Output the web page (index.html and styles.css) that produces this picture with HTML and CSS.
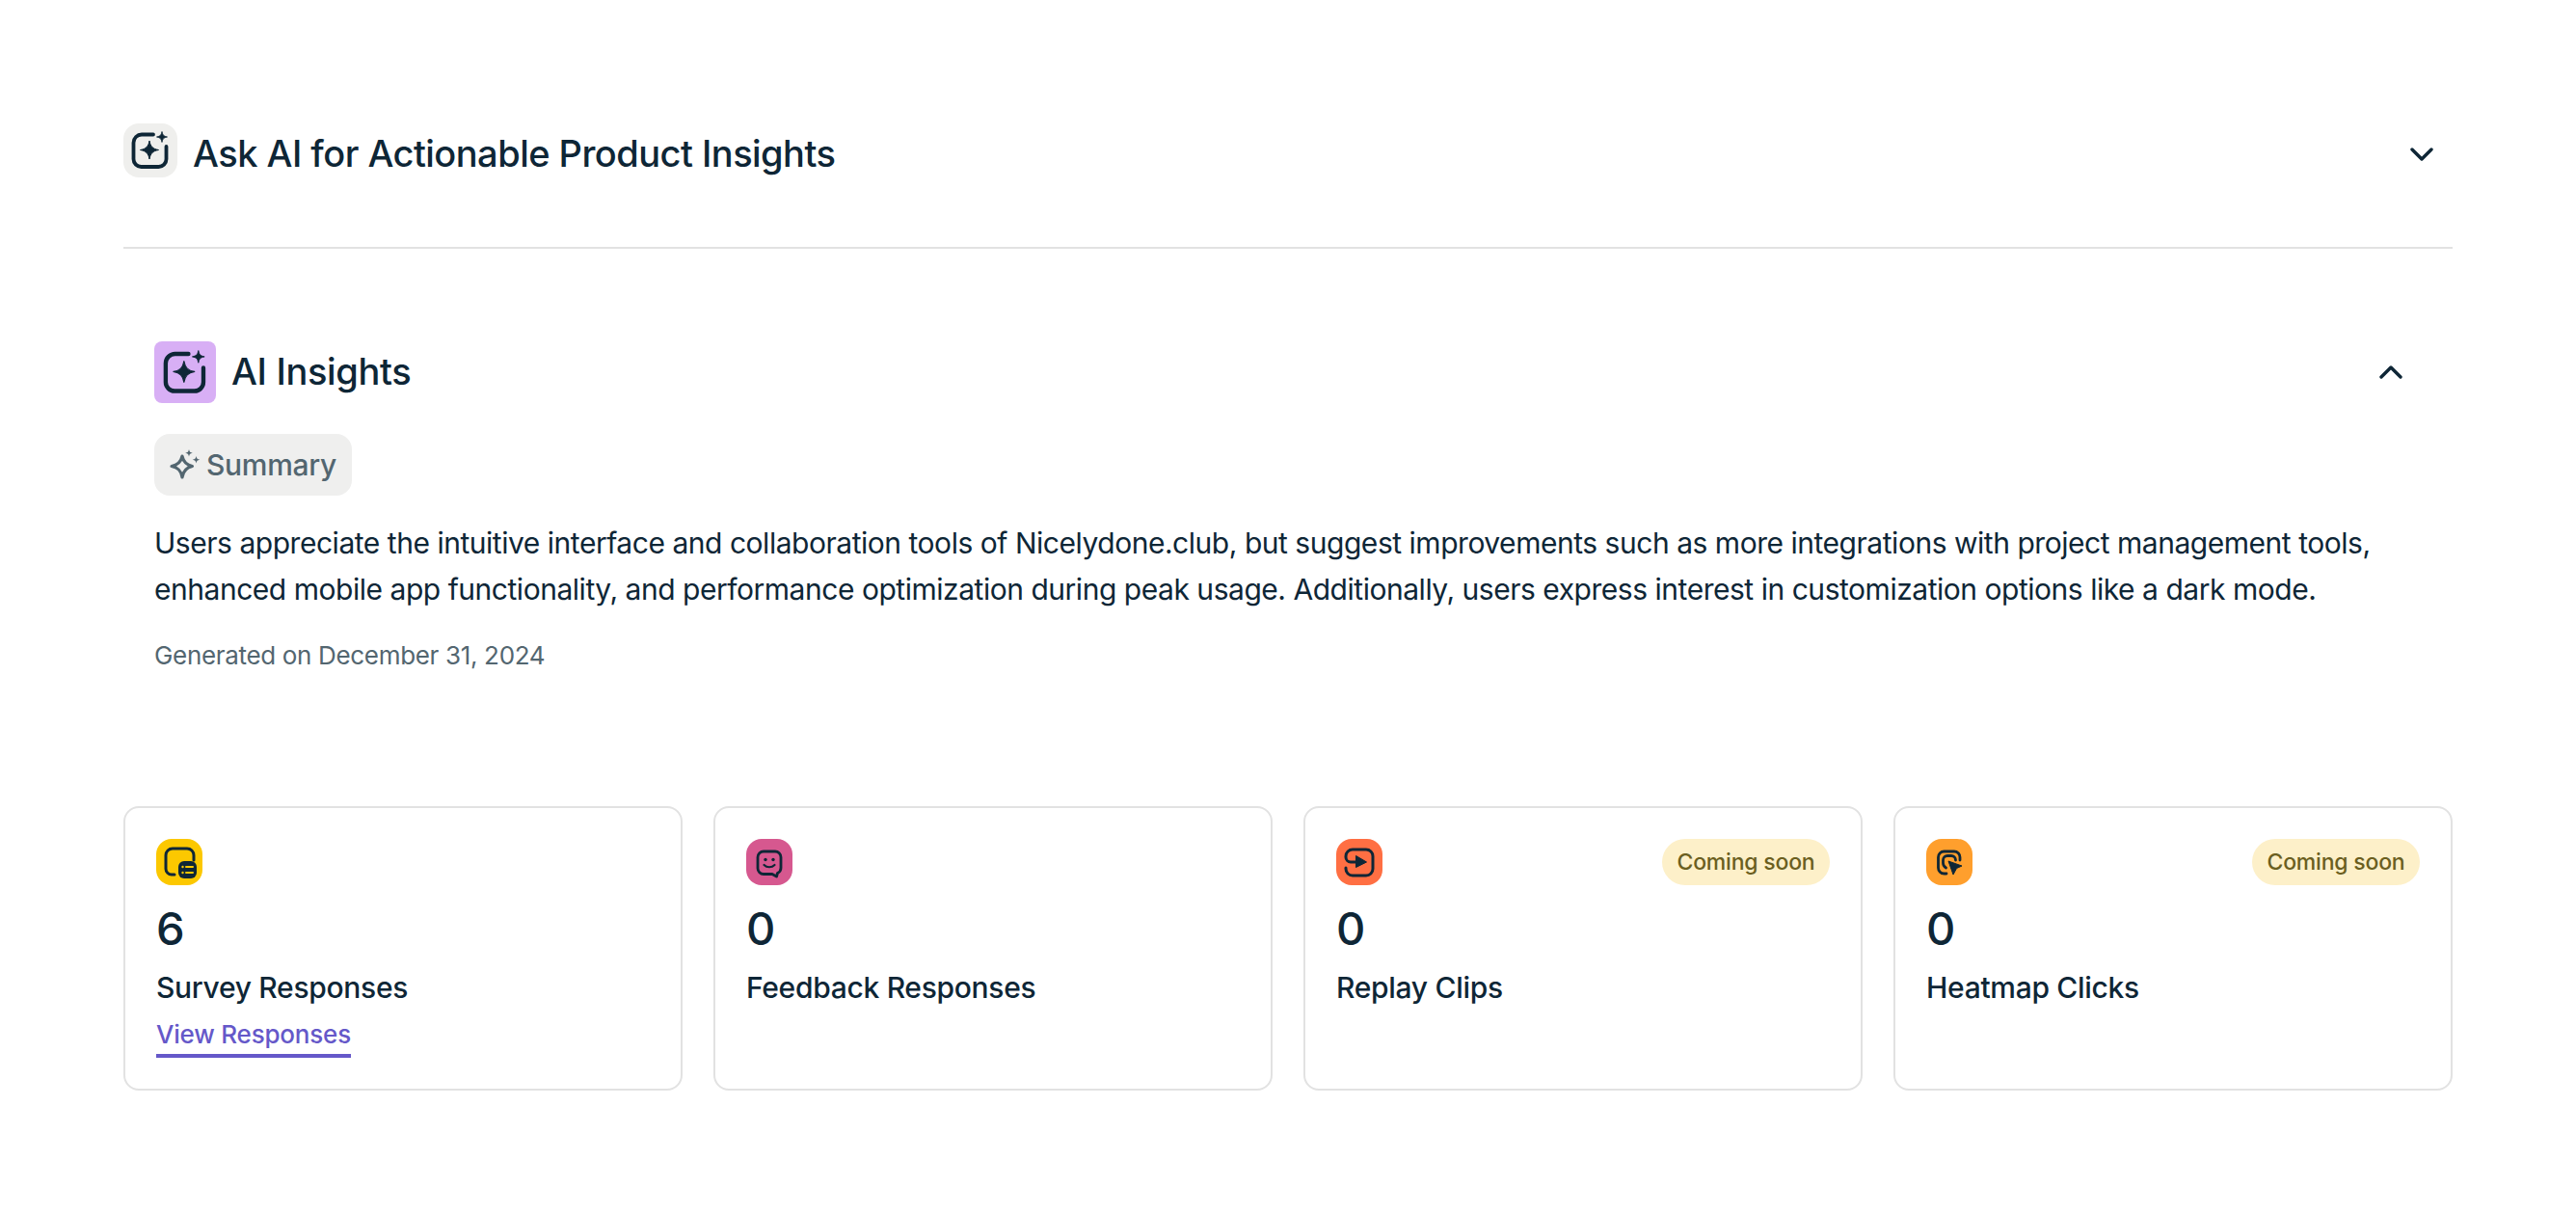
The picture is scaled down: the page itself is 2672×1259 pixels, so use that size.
FILE: index.html
```html
<!DOCTYPE html>
<html lang="en">
<head>
<meta charset="utf-8">
<title>AI Insights</title>
<link rel="stylesheet" href="styles.css">
</head>
<body>
<svg class="defs" width="0" height="0" aria-hidden="true">
  <symbol id="ai" viewBox="0 0 40 40">
    <path d="M23 3.500H11A8.500 8.500 0 0 0 2.500 12v17a8 8 0 0 0 8 8h18a8 8 0 0 0 8-8V16" fill="none" stroke="currentColor" stroke-width="3.800" stroke-linecap="round"/>
    <path d="M19 10c1 5.800 3.500 8.500 9.500 9.500-6 1-8.500 3.700-9.500 9.500-1-5.800-3.500-8.500-9.500-9.500 6-1 8.500-3.700 9.500-9.500Z" fill="currentColor" stroke="currentColor" stroke-linejoin="round"/>
    <path d="M32 .5c.8 3.800 1.700 4.700 5.500 5.500-3.800.8-4.700 1.700-5.500 5.500-.8-3.800-1.700-4.700-5.500-5.500 3.800-.8 4.700-1.700 5.500-5.500Z" fill="currentColor" stroke="currentColor" stroke-width=".8" stroke-linejoin="round"/>
  </symbol>
  <symbol id="chev" viewBox="0 0 24 14">
    <path d="M2 2l10 10L22 2" fill="none" stroke="currentColor" stroke-width="3.400" stroke-linecap="round" stroke-linejoin="round"/>
  </symbol>
</svg>
<main class="page">
  <header class="ask">
    <div class="ask-title">
      <span class="ask-icon"><svg class="i40"><use href="#ai"/></svg></span>
      <h1>Ask AI for Actionable Product Insights</h1>
    </div>
    <svg class="chev down"><use href="#chev"/></svg>
  </header>

  <section class="insights">
    <div class="ins-head">
      <div class="ins-title">
        <span class="ins-icon"><svg class="i46"><use href="#ai"/></svg></span>
        <h2>AI Insights</h2>
      </div>
      <svg class="chev up"><use href="#chev"/></svg>
    </div>
    <div class="pill-summary">
      <svg class="spark" viewBox="0 0 32 32">
        <path d="M13 7c1.200 5.800 4.700 9.300 10.500 10.500-5.800 1.200-9.300 4-10.500 11.500-1.200-7.500-4.700-10.300-11-11.500C8.300 16.300 11.800 12.800 13 7Z" fill="none" stroke="currentColor" stroke-width="3.200" stroke-linejoin="round"/>
        <path d="M20 0c.5 2.600 1.200 3.300 3.800 3.800-2.600.5-3.300 1.200-3.800 3.800-.5-2.600-1.200-3.300-3.800-3.800 2.600-.5 3.300-1.200 3.800-3.800ZM27.500 7c.5 2.600 1.200 3.300 3.800 3.800-2.600.5-3.300 1.200-3.800 3.800-.5-2.600-1.200-3.300-3.800-3.800 2.600-.5 3.300-1.200 3.800-3.800Z" fill="currentColor"/>
      </svg>
      <span>Summary</span>
    </div>
    <p class="body-text">Users appreciate the intuitive interface and collaboration tools of Nicelydone.club, but suggest improvements such as more integrations with project management tools, enhanced mobile app functionality, and performance optimization during peak usage. Additionally, users express interest in customization options like a dark mode.</p>
    <p class="generated">Generated on December 31, 2024</p>
  </section>

  <section class="cards">
    <article class="card">
      <div class="card-top">
        <span class="c-icon yellow">
          <svg viewBox="0 0 48 48">
            <path d="M19 37h-3a6 6 0 0 1-6-6V17a7 7 0 0 1 7-7h15a7 7 0 0 1 7 7v5" fill="none" stroke="currentColor" stroke-width="3" stroke-linecap="round"/>
            <rect x="23" y="23" width="19" height="18" rx="6" fill="currentColor"/>
            <path d="M31 29h7M31 35h7" stroke="#fcc800" stroke-width="2" stroke-linecap="round"/>
            <circle cx="27.500" cy="29" r="1.200" fill="#fcc800"/><circle cx="27.500" cy="35" r="1.200" fill="#fcc800"/>
          </svg>
        </span>
      </div>
      <div class="num">6</div>
      <div class="label">Survey Responses</div>
      <a class="link" href="#">View Responses</a>
    </article>
    <article class="card">
      <div class="card-top">
        <span class="c-icon pink">
          <svg viewBox="0 0 48 48">
            <path d="M18 13h12a6 6 0 0 1 6 6v11a6 6 0 0 1-3.500 5.500L31.500 39 27 36.500h-9a6 6 0 0 1-6-6V19a6 6 0 0 1 6-6Z" fill="none" stroke="currentColor" stroke-width="2.800" stroke-linejoin="round"/>
            <circle cx="20" cy="21.500" r="1.700" fill="currentColor"/><circle cx="28" cy="21.500" r="1.700" fill="currentColor"/>
            <path d="M18.500 27c3 3 8 3 11 0" fill="none" stroke="currentColor" stroke-width="2.200" stroke-linecap="round"/>
          </svg>
        </span>
      </div>
      <div class="num">0</div>
      <div class="label">Feedback Responses</div>
    </article>
    <article class="card">
      <div class="card-top">
        <span class="c-icon orange">
          <svg viewBox="0 0 48 48">
            <path d="M22 24h-7a5 5 0 0 1-5-5v-1a7 7 0 0 1 7-7h14a7 7 0 0 1 7 7v13a7 7 0 0 1-7 7H17a7 7 0 0 1-7-7v-1" fill="none" stroke="currentColor" stroke-width="3" stroke-linecap="round" stroke-linejoin="round"/>
            <path d="M20.500 17.500l11 6.500-11 5.500Z" fill="currentColor" stroke="currentColor" stroke-linejoin="round"/>
          </svg>
        </span>
      </div>
      <div class="num">0</div>
      <div class="label">Replay Clips</div>
      <span class="soon">Coming soon</span>
    </article>
    <article class="card">
      <div class="card-top">
        <span class="c-icon amber">
          <svg viewBox="0 0 48 48">
            <path d="M21 36h-2.500a6 6 0 0 1-6-6V19a6 6 0 0 1 6-6H29a6 6 0 0 1 6 6v3" fill="none" stroke="currentColor" stroke-width="2.800" stroke-linecap="round"/>
            <path d="M20.500 30a6 6 0 0 1-3-5v-3a4.500 4.500 0 0 1 4.500-4.500h4a4.500 4.500 0 0 1 4.500 4.500" fill="none" stroke="currentColor" stroke-width="2.800" stroke-linecap="round"/>
            <path d="M23 23l14 5-5.500 2.500L28 37Z" fill="currentColor" stroke="currentColor" stroke-linejoin="round"/>
          </svg>
        </span>
      </div>
      <div class="num">0</div>
      <div class="label">Heatmap Clicks</div>
      <span class="soon">Coming soon</span>
    </article>
  </section>
</main>
</body>
</html>
```

FILE: styles.css
```css
* { box-sizing: border-box; }
html, body { margin: 0; background: #fff; }
body {
  font-family: Inter, "Liberation Sans", sans-serif;
  color: #0e2636;
}
.defs { position: absolute; }
.page { padding: 128px 128px 0; }

.ask {
  display: flex;
  align-items: flex-start;
  justify-content: space-between;
  padding: 0 20px 0 0;
  border-bottom: 2px solid #e2e2e2;
  height: 130px;
}
.ask-title { display: flex; align-items: flex-start; gap: 16px; }
.ask-icon {
  width: 56px; height: 56px;
  border-radius: 16px;
  background: #efefed;
  display: flex; align-items: center; justify-content: center;
}
.i40 { width: 40px; height: 40px; }
.ask h1 { margin: 3px 0 0; font-size: 38px; font-weight: 500; letter-spacing: -0.53px; line-height: 56px; }
.chev { width: 24px; height: 14px; color: #0e2636; }
.chev.down { margin-top: 25px; }
.chev.up { transform: rotate(180deg); }

.insights { padding: 96px 52px 0 32px; }
.ins-head { display: flex; align-items: center; justify-content: space-between; height: 64px; }
.ins-title { display: flex; align-items: center; gap: 16px; }
.ins-icon {
  width: 64px; height: 64px;
  border-radius: 8px;
  background: #d8aff5;
  display: flex; align-items: center; justify-content: center;
}
.i46 { width: 46px; height: 46px; }
.ins-head h2 { margin: -2px 0 0; font-size: 38px; font-weight: 500; letter-spacing: -0.35px; line-height: 56px; }

.pill-summary {
  display: inline-flex;
  align-items: center;
  gap: 6px;
  margin-top: 32px;
  height: 64px;
  padding: 0 16px;
  border-radius: 16px;
  background: #efefee;
  color: #536670;
  font-size: 30px;
  font-weight: 500;
  letter-spacing: -0.3px;
}
.spark { width: 32px; height: 32px; }
.body-text {
  margin: 25px -30px 0 0;
  font-size: 30px;
  line-height: 48px;
  letter-spacing: -0.47px;
}
.generated { margin: 25px 0 0; font-size: 26px; line-height: 40px; color: #536670; letter-spacing: -0.33px; }

.cards {
  display: grid;
  grid-template-columns: repeat(4, 1fr);
  gap: 32px;
  margin-top: 136px;
}
.card {
  position: relative;
  height: 295px;
  padding: 32px;
  border: 2px solid #e2e2e2;
  border-radius: 16px;
}
.card-top { height: 48px; }
.c-icon {
  display: block;
  width: 48px; height: 48px;
  border-radius: 16px;
  color: #0e2636;
}
.c-icon svg { display: block; width: 48px; height: 48px; }
.yellow { background: #fcc800; }
.pink { background: #d6588f; }
.orange { background: #ff6f43; }
.amber { background: #ff9f2d; }
.num { margin-top: 15px; font-size: 47px; font-weight: 500; line-height: 60px; }
.label { margin-top: 11px; font-size: 30px; font-weight: 500; line-height: 40px; letter-spacing: -0.3px; }
.link {
  display: inline-block;
  margin-top: 9px;
  font-size: 26px;
  font-weight: 500;
  line-height: 40px;
  color: #6558c9;
  text-decoration: none;
  border-bottom: 4px solid #6558c9;
  letter-spacing: -0.2px;
}
.soon {
  position: absolute;
  top: 32px; right: 32px;
  height: 48px;
  padding: 0 15.5px;
  border-radius: 24px;
  background: #fdf0c9;
  color: #6b5f1f;
  font-size: 23px;
  font-weight: 500;
  line-height: 48px;
  letter-spacing: -0.2px;
}
```
